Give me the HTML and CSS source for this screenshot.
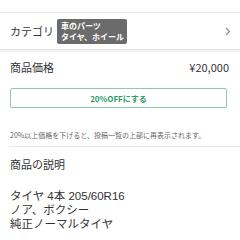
FILE: index.html
```html
<!DOCTYPE html>
<html lang="ja">
<head>
<meta charset="utf-8">
<link rel="stylesheet" href="styles.css">
</head>
<body>
<div class="page">
  <div class="cat-row">
    <span class="label">カテゴリ</span>
    <span class="tag"><span class="tag-line">車のパーツ</span><span class="tag-line">タイヤ、ホイール</span></span>
    <svg class="chev" width="6" height="9" viewBox="0 0 6 9"><path d="M1 1l3.5 3.5L1 8" fill="none" stroke="#8a8a8a" stroke-width="1.1"/></svg>
  </div>
  <div class="price-row">
    <span class="label">商品価格</span>
    <span class="price">¥20,000</span>
  </div>
  <div class="off-btn">20%OFFにする</div>
  <p class="note">20%以上価格を下げると、投稿一覧の上部に再表示されます。</p>
  <div class="desc-head">商品の説明</div>
  <div class="desc">
    <div class="desc-line">タイヤ 4本 205/60R16</div>
    <div class="desc-line">ノア、ボクシー</div>
    <div class="desc-line">純正ノーマルタイヤ</div>
  </div>
</div>
</body>
</html>
```

FILE: styles.css
```css
html, body { margin: 0; padding: 0; background: #fff; }
body { font-family: "Noto Sans CJK JP", "Noto Sans", sans-serif; color: #333; }
.page { width: 240px; padding-top: 12px; }
.cat-row {
  display: flex; align-items: center; height: 36px;
  border-top: 1px solid #e8e8e8; border-bottom: 1px solid #e0e0e0;
  box-shadow: 0 2px 0 #f3f3f3;
  padding: 0 9px 0 10px;
}
.label { font-size: 11px; width: 47px; }
.tag {
  display: flex; flex-direction: column;
  background: #6b6b6b; color: #fff; font-size: 8px; line-height: 11px; font-weight: bold;
  padding: 1px 3px 2px 4px; border-radius: 2px; white-space: nowrap;
}
.tag-line { display: block; height: 11px; }
.chev { margin-left: auto; }
.price-row {
  display: flex; justify-content: space-between; align-items: center;
  padding: 9px 11px 0 10px; height: 16px;
}
.price { font-size: 11px; }
.off-btn {
  margin: 13px 13px 0 10px; height: 18px; border: 1px solid #8fc9ad; border-radius: 2px;
  color: #2f9a66; font-size: 8px; font-weight: bold; display: flex; align-items: center; justify-content: center;
}
.note { margin: 22px 0 0 10px; font-size: 7px; color: #666; line-height: 10px; padding-bottom: 6px; border-bottom: 1px solid #e6e6e6; }
.desc-head { margin: 10px 0 0 10px; font-size: 11px; line-height: 14px; }
.desc { margin: 18px 0 0 10px; font-family: "Liberation Sans", "Noto Sans CJK JP", sans-serif; }
.desc-line { font-size: 11.5px; line-height: 14px; height: 14px; white-space: nowrap; }
```
